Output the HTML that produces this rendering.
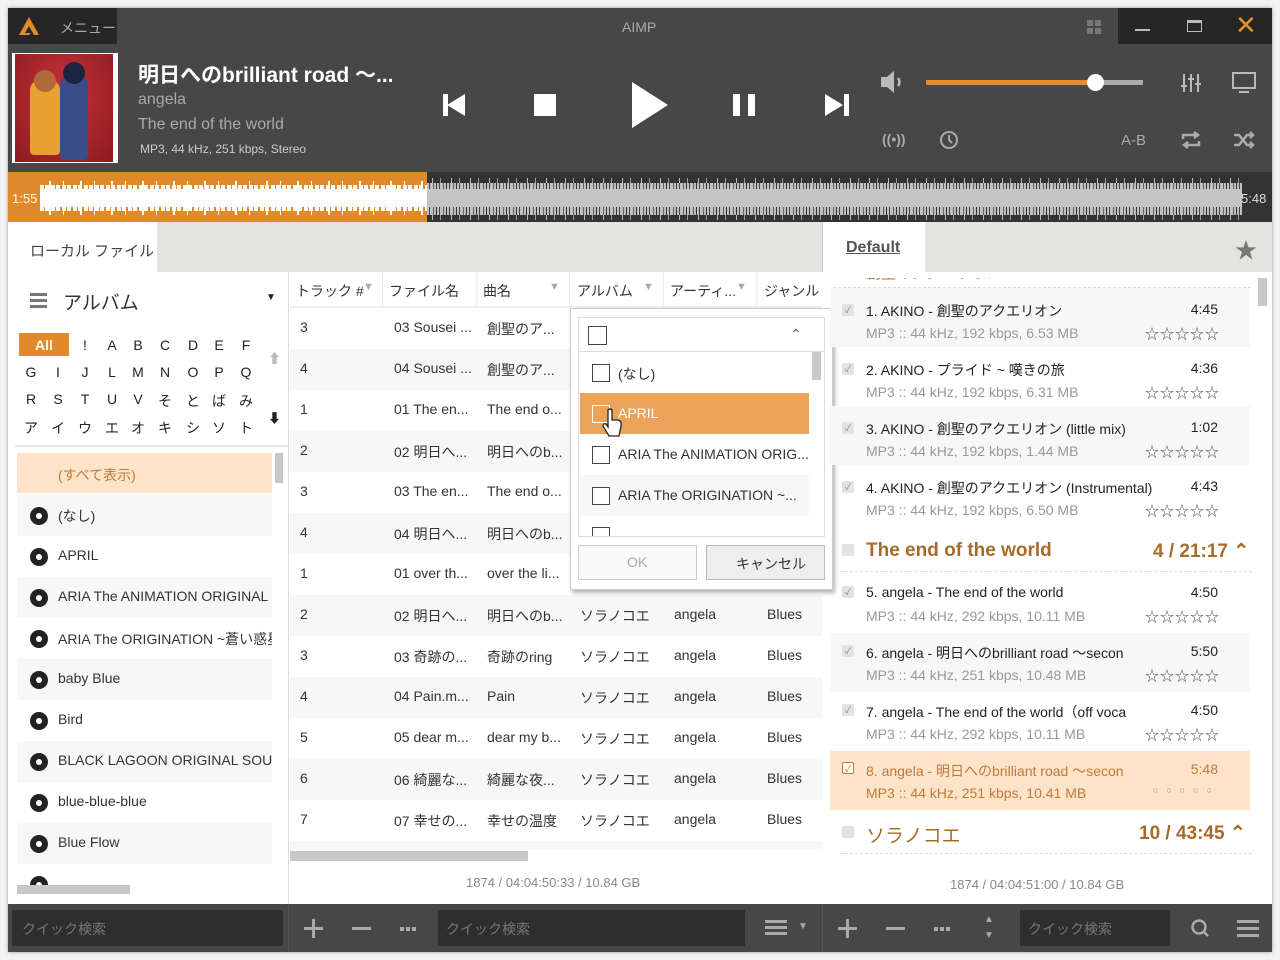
<!DOCTYPE html>
<html><head><meta charset="utf-8"><style>
*{box-sizing:border-box;margin:0;padding:0}
body{width:1280px;height:960px;background:#f3f3f3;font-family:"Liberation Sans","Noto Sans CJK JP",sans-serif;position:relative;overflow:hidden;color:#333}
.a{position:absolute}
.win{left:8px;top:8px;width:1264px;height:944px;background:#fff;box-shadow:0 0 3px rgba(0,0,0,.4)}
.dark{background:#474747}
.t{position:absolute;white-space:nowrap}
.row{position:absolute;left:290px;width:532px;height:41px;font-size:14px}
.row span{position:absolute;top:11px;white-space:nowrap}
.alt{background:#f7f7f7}
.li{position:absolute;left:17px;width:255px;height:41px;font-size:14px}
.li .d{position:absolute;left:13px;top:12px;width:18px;height:18px;border-radius:50%;background:#222}
.li .d:after{content:"";position:absolute;left:6px;top:6px;width:6px;height:6px;border-radius:50%;background:#fff}
.li span{position:absolute;left:41px;top:11px;width:214px;overflow:hidden;white-space:nowrap}
.pi{position:absolute;left:830px;width:420px;height:59px}
.pi .cb{position:absolute;left:12px;top:16px;width:12px;height:12px;background:#e2e2e2;border-radius:2px;font-size:9px;color:#888;text-align:center;line-height:12px;font-style:normal}
.pi .n{position:absolute;left:36px;top:21px;font-size:14px;color:#222;white-space:nowrap}
.pi .s{position:absolute;left:36px;top:45px;font-size:14px;color:#999;white-space:nowrap}
.pi .tm{position:absolute;right:32px;top:21px;font-size:14px;color:#222}
.pi .st{position:absolute;right:30px;top:44px;font-size:14px;color:#555;letter-spacing:1px}
.dd .it{position:absolute;left:580px;width:229px;height:41px;font-size:14px}
.dd .it i{position:absolute;left:12px;top:12px;width:18px;height:18px;border:1.5px solid #444;background:#fff}
.dd .it span{position:absolute;left:38px;top:12px;white-space:nowrap}
.alpha span{position:absolute;font-size:14px;color:#222;width:16px;text-align:center}
.dots{position:absolute;width:4px;height:4px;background:#aaa;box-shadow:6px 0 #aaa,12px 0 #aaa}
</style></head><body>
<div class="a win"></div>
<div class="a dark" style="left:8px;top:8px;width:1264px;height:164px"></div>
<div class="a" style="left:8px;top:8px;width:109px;height:36px;background:#262626"></div>
<svg class="a" style="left:18px;top:16px" width="22" height="20"><path d="M11 1 L21 19 L16 19 L11 10 L7 17 L13 17 L11 19 L1 19 Z" fill="#e08b2c"/></svg>
<div class="t" style="left:60px;top:18px;font-size:14px;color:#aaa">メニュー</div>
<div class="t" style="left:622px;top:19px;font-size:14px;color:#aaa">AIMP</div>
<div class="a" style="left:1087px;top:20px;width:6px;height:6px;background:#777;box-shadow:8px 0 #777,0 8px #777,8px 8px #777"></div>
<div class="a" style="left:1118px;top:8px;width:154px;height:36px;background:#262626"></div>
<div class="a" style="left:1135px;top:29px;width:15px;height:2px;background:#bbb"></div>
<div class="a" style="left:1187px;top:20px;width:15px;height:12px;border:1.5px solid #bbb;border-top-width:3px"></div>
<div class="t" style="left:1235px;top:10px;font-size:26px;color:#e8902a">✕</div>
<div class="a" style="left:12px;top:53px;width:106px;height:110px;background:#fff"></div>
<div class="a" style="left:15px;top:54px;width:98px;height:108px;background:radial-gradient(ellipse at 50% 40%,#c8343a,#8a1a1e)"></div>
<div class="a" style="left:30px;top:80px;width:30px;height:75px;background:#e8a030;border-radius:10px 10px 4px 4px"></div>
<div class="a" style="left:60px;top:75px;width:28px;height:85px;background:#3a4c8a;border-radius:10px 10px 4px 4px"></div>
<div class="a" style="left:34px;top:70px;width:22px;height:22px;background:#b06a3a;border-radius:50%"></div>
<div class="a" style="left:63px;top:62px;width:22px;height:22px;background:#1e2440;border-radius:50%"></div>
<div class="t" style="left:138px;top:59px;font-size:21px;font-weight:bold;color:#fff">明日へのbrilliant road ～...</div>
<div class="t" style="left:138px;top:91px;font-size:16px;color:#aaa">angela</div>
<div class="t" style="left:138px;top:116px;font-size:16px;color:#aaa">The end of the world</div>
<div class="t" style="left:140px;top:142px;font-size:12px;color:#ccc">MP3, 44 kHz, 251 kbps, Stereo</div>
<svg class="a" style="left:443px;top:94px" width="24" height="22"><rect x="0" y="0" width="5" height="22" fill="#fff"/><path d="M4 11 L22 0 L22 22Z" fill="#fff"/></svg>
<div class="a" style="left:534px;top:94px;width:22px;height:22px;background:#fff"></div>
<svg class="a" style="left:632px;top:82px" width="38" height="46"><path d="M0 0 L36 23 L0 46Z" fill="#fff"/></svg>
<div class="a" style="left:733px;top:94px;width:7px;height:22px;background:#fff"></div>
<div class="a" style="left:748px;top:94px;width:7px;height:22px;background:#fff"></div>
<svg class="a" style="left:825px;top:94px" width="24" height="22"><path d="M0 0 L18 11 L0 22Z" fill="#fff"/><rect x="19" y="0" width="5" height="22" fill="#fff"/></svg>
<svg class="a" style="left:880px;top:70px" width="28" height="24"><path d="M1 7 H7 L14 1 V23 L7 17 H1Z" fill="#bbb"/><path d="M18 8 Q21 12 18 16" stroke="#bbb" stroke-width="2.5" fill="none"/></svg>
<div class="a" style="left:926px;top:80px;width:170px;height:5px;background:#e28e2e"></div>
<div class="a" style="left:1096px;top:80px;width:47px;height:5px;background:#aaa"></div>
<div class="a" style="left:1087px;top:74px;width:17px;height:17px;border-radius:50%;background:#fff"></div>
<svg class="a" style="left:1180px;top:72px" width="22" height="22" stroke="#bbb" stroke-width="2"><path d="M4 2V20M11 2V20M18 2V20"/><path d="M1 14H7M8 7H14M15 12H21"/></svg>
<svg class="a" style="left:1232px;top:72px" width="24" height="22" stroke="#bbb" stroke-width="2" fill="none"><rect x="1" y="1" width="22" height="15"/><path d="M7 20H17"/></svg>
<div class="t" style="left:882px;top:131px;font-size:14px;color:#aaa;font-weight:bold">((•))</div>
<svg class="a" style="left:939px;top:130px" width="20" height="20" stroke="#aaa" stroke-width="2" fill="none"><circle cx="10" cy="10" r="8"/><path d="M10 5V10L13 13"/></svg>
<div class="t" style="left:1121px;top:132px;font-size:15px;color:#aaa">A-B</div>
<svg class="a" style="left:1181px;top:131px" width="20" height="18" stroke="#aaa" stroke-width="2.5" fill="none"><path d="M2 8V4H16M13 1L17 4L13 7M18 10V14H4M7 17L3 14L7 11"/></svg>
<svg class="a" style="left:1233px;top:131px" width="22" height="18" stroke="#aaa" stroke-width="2.5" fill="none"><path d="M1 4H6L14 14H20M17 11L20 14L17 17M1 14H6L14 4H20M17 1L20 4L17 7"/></svg>
<!-- waveform -->
<div class="a" style="left:8px;top:172px;width:1264px;height:50px;background:#333"></div>
<div class="a" style="left:8px;top:172px;width:419px;height:50px;background:#e08a2c"></div>
<div class="a" style="left:40px;top:181px;width:387px;height:34px;background:repeating-linear-gradient(90deg,transparent 0 9px,#fff 9px 11px,transparent 11px 23px,#fff 23px 24px,transparent 24px 31px)"></div>
<div class="a" style="left:40px;top:185px;width:387px;height:26px;background:repeating-linear-gradient(90deg,#fff 0 4px,transparent 4px 5px,#fff 5px 9px,transparent 9px 11px)"></div>
<div class="a" style="left:40px;top:189px;width:387px;height:18px;background:#fff"></div>
<div class="a" style="left:427px;top:178px;width:815px;height:42px;background:repeating-linear-gradient(90deg,transparent 0 5px,#bbb 5px 6px,transparent 6px 13px,#999 13px 14px,transparent 14px 19px)"></div>
<div class="a" style="left:427px;top:183px;width:815px;height:32px;background:repeating-linear-gradient(90deg,#c0c0c0 0 2px,#444 2px 3px,#c0c0c0 3px 6px,#666 6px 7px,#bbb 7px 9px,#333 9px 10px)"></div>
<div class="a" style="left:427px;top:189px;width:815px;height:18px;background:#c4c4c4"></div>
<div class="t" style="left:12px;top:191px;font-size:13px;color:#fff">1:55</div>
<div class="t" style="left:1241px;top:191px;font-size:13px;color:#ddd">5:48</div>
<div class="a" style="left:8px;top:222px;width:814px;height:50px;background:#e3e3e0"></div>
<div class="a" style="left:8px;top:222px;width:149px;height:50px;background:#fff"></div>
<div class="t" style="left:30px;top:240px;font-size:15px;color:#444">ローカル ファイル</div>
<div class="a" style="left:822px;top:222px;width:450px;height:50px;background:#e3e3e0;border-left:1px solid #ccc"></div>
<div class="a" style="left:823px;top:222px;width:102px;height:50px;background:#fff"></div>
<div class="t" style="left:846px;top:239px;font-size:16px;font-weight:bold;color:#555;text-decoration:underline">Default</div>
<div class="t" style="left:1235px;top:233px;font-size:22px;color:#777">★</div>
<div class="a" style="left:288px;top:272px;width:1px;height:632px;background:#ddd"></div>
<div class="a" style="left:30px;top:293px;width:17px;height:3px;background:#777;box-shadow:0 6px #777,0 12px #777"></div>
<div class="t" style="left:63px;top:288px;font-size:19px;color:#333">アルバム</div>
<div class="t" style="left:266px;top:292px;font-size:10px;color:#222">▼</div>
<div class="a" style="left:19px;top:333px;width:50px;height:23px;background:#e08a2c"></div>
<div class="t" style="left:35px;top:337px;font-size:14px;color:#fff;font-weight:bold">All</div>
<div class="alpha">
<span style="left:77px;top:337px">!</span><span style="left:104px;top:337px">A</span><span style="left:130px;top:337px">B</span><span style="left:157px;top:337px">C</span><span style="left:185px;top:337px">D</span><span style="left:211px;top:337px">E</span><span style="left:238px;top:337px">F</span>
<span style="left:23px;top:364px">G</span><span style="left:50px;top:364px">I</span><span style="left:77px;top:364px">J</span><span style="left:104px;top:364px">L</span><span style="left:130px;top:364px">M</span><span style="left:157px;top:364px">N</span><span style="left:185px;top:364px">O</span><span style="left:211px;top:364px">P</span><span style="left:238px;top:364px">Q</span>
<span style="left:23px;top:391px">R</span><span style="left:50px;top:391px">S</span><span style="left:77px;top:391px">T</span><span style="left:104px;top:391px">U</span><span style="left:130px;top:391px">V</span><span style="left:157px;top:391px">そ</span><span style="left:185px;top:391px">と</span><span style="left:211px;top:391px">ば</span><span style="left:238px;top:391px">み</span>
<span style="left:23px;top:418px">ア</span><span style="left:50px;top:418px">イ</span><span style="left:77px;top:418px">ウ</span><span style="left:104px;top:418px">エ</span><span style="left:130px;top:418px">オ</span><span style="left:157px;top:418px">キ</span><span style="left:185px;top:418px">シ</span><span style="left:211px;top:418px">ソ</span><span style="left:238px;top:418px">ト</span>
</div>
<div class="t" style="left:268px;top:348px;font-size:13px;color:#bbb">⬆</div>
<div class="t" style="left:268px;top:408px;font-size:13px;color:#222">⬇</div>
<div class="a" style="left:15px;top:445px;width:273px;height:2px;background:#e6e6e6"></div>
<div class="a" style="left:17px;top:453px;width:255px;height:40px;background:#fde3c8"></div>
<div class="t" style="left:58px;top:465px;font-size:14px;color:#c07a3a">(すべて表示)</div>
<div class="a" style="left:275px;top:453px;width:8px;height:30px;background:#c8c8c8"></div>
<div class="li alt" style="top:495px"><i class="d"></i><span>(なし)</span></div>
<div class="li" style="top:536px"><i class="d"></i><span>APRIL</span></div>
<div class="li alt" style="top:577px"><i class="d"></i><span>ARIA The ANIMATION ORIGINAL S</span></div>
<div class="li" style="top:618px"><i class="d"></i><span>ARIA The ORIGINATION ~蒼い惑星</span></div>
<div class="li alt" style="top:659px"><i class="d"></i><span>baby Blue</span></div>
<div class="li" style="top:700px"><i class="d"></i><span>Bird</span></div>
<div class="li alt" style="top:741px"><i class="d"></i><span>BLACK LAGOON ORIGINAL SOUND</span></div>
<div class="li" style="top:782px"><i class="d"></i><span>blue-blue-blue</span></div>
<div class="li alt" style="top:823px"><i class="d"></i><span>Blue Flow</span></div>
<div class="li" style="top:864px;height:25px;overflow:hidden"><i class="d"></i></div>
<div class="a" style="left:17px;top:885px;width:113px;height:9px;background:#c8c8c8"></div>
<div class="a" style="left:290px;top:272px;width:532px;height:36px;border-bottom:2px solid #eee;font-size:14px">
<span class="t" style="left:6px;top:9px">トラック #</span><span class="t" style="left:73px;top:9px;color:#aaa;font-size:11px">▼</span>
<span class="t" style="left:99px;top:9px">ファイル名</span>
<span class="t" style="left:193px;top:9px">曲名</span><span class="t" style="left:259px;top:9px;color:#aaa;font-size:11px">▼</span>
<span class="t" style="left:287px;top:9px">アルバム</span><span class="t" style="left:353px;top:9px;color:#aaa;font-size:11px">▼</span>
<span class="t" style="left:380px;top:9px">アーティ...</span><span class="t" style="left:446px;top:9px;color:#aaa;font-size:11px">▼</span>
<span class="t" style="left:474px;top:9px">ジャンル</span>
</div>
<div class="a" style="left:382px;top:272px;width:1px;height:36px;background:#eee;box-shadow:94px 0 #eee,187px 0 #eee,281px 0 #eee,374px 0 #eee"></div>
<div class="row" style="top:308px"><span style="left:10px">3</span><span style="left:104px">03 Sousei ...</span><span style="left:197px">創聖のア...</span></div>
<div class="row alt" style="top:349px"><span style="left:10px">4</span><span style="left:104px">04 Sousei ...</span><span style="left:197px">創聖のア...</span></div>
<div class="row" style="top:390px"><span style="left:10px">1</span><span style="left:104px">01 The en...</span><span style="left:197px">The end o...</span></div>
<div class="row alt" style="top:431px"><span style="left:10px">2</span><span style="left:104px">02 明日へ...</span><span style="left:197px">明日へのb...</span></div>
<div class="row" style="top:472px"><span style="left:10px">3</span><span style="left:104px">03 The en...</span><span style="left:197px">The end o...</span></div>
<div class="row alt" style="top:513px"><span style="left:10px">4</span><span style="left:104px">04 明日へ...</span><span style="left:197px">明日へのb...</span></div>
<div class="row" style="top:554px"><span style="left:10px">1</span><span style="left:104px">01 over th...</span><span style="left:197px">over the li...</span></div>
<div class="row alt" style="top:595px"><span style="left:10px">2</span><span style="left:104px">02 明日へ...</span><span style="left:197px">明日へのb...</span><span style="left:290px">ソラノコエ</span><span style="left:384px">angela</span><span style="left:477px">Blues</span></div>
<div class="row" style="top:636px"><span style="left:10px">3</span><span style="left:104px">03 奇跡の...</span><span style="left:197px">奇跡のring</span><span style="left:290px">ソラノコエ</span><span style="left:384px">angela</span><span style="left:477px">Blues</span></div>
<div class="row alt" style="top:677px"><span style="left:10px">4</span><span style="left:104px">04 Pain.m...</span><span style="left:197px">Pain</span><span style="left:290px">ソラノコエ</span><span style="left:384px">angela</span><span style="left:477px">Blues</span></div>
<div class="row" style="top:718px"><span style="left:10px">5</span><span style="left:104px">05 dear m...</span><span style="left:197px">dear my b...</span><span style="left:290px">ソラノコエ</span><span style="left:384px">angela</span><span style="left:477px">Blues</span></div>
<div class="row alt" style="top:759px"><span style="left:10px">6</span><span style="left:104px">06 綺麗な...</span><span style="left:197px">綺麗な夜...</span><span style="left:290px">ソラノコエ</span><span style="left:384px">angela</span><span style="left:477px">Blues</span></div>
<div class="row" style="top:800px"><span style="left:10px">7</span><span style="left:104px">07 幸せの...</span><span style="left:197px">幸せの温度</span><span style="left:290px">ソラノコエ</span><span style="left:384px">angela</span><span style="left:477px">Blues</span></div>
<div class="row alt" style="top:841px;height:8px"></div>
<div class="a" style="left:290px;top:851px;width:238px;height:10px;background:#c8c8c8"></div>
<div class="t" style="left:466px;top:875px;font-size:13px;color:#888">1874 / 04:04:50:33 / 10.84 GB</div>
<div class="dd">
<div class="a" style="left:570px;top:308px;width:263px;height:282px;background:#fff;border:1px solid #ccc;box-shadow:2px 3px 4px rgba(0,0,0,.3)"></div>
<div class="a" style="left:578px;top:317px;width:247px;height:220px;border:1px solid #ddd"></div>
<div class="a" style="left:588px;top:326px;width:19px;height:19px;border:1.5px solid #444"></div>
<div class="t" style="left:790px;top:326px;font-size:14px;color:#555">⌃</div>
<div class="a" style="left:579px;top:351px;width:245px;height:1px;background:#ddd"></div>
<div class="a" style="left:812px;top:352px;width:9px;height:28px;background:#c8c8c8"></div>
<div class="it" style="top:352px"><i></i><span>(なし)</span></div>
<div class="it" style="top:393px;background:#eba35a;color:#fff"><i style="background:transparent;border-color:#fff"></i><span>APRIL</span></div>
<div class="it" style="top:434px"><i></i><span>ARIA The ANIMATION ORIG...</span></div>
<div class="it alt" style="top:475px"><i></i><span>ARIA The ORIGINATION ~...</span></div>
<div class="a" style="left:592px;top:527px;width:18px;height:9px;border:1.5px solid #444;border-bottom:none"></div>
<svg class="a" style="left:600px;top:408px" width="24" height="32"><path d="M8 2 Q10 0 12 2 V12 H18 Q22 13 21 18 L19 28 H9 L3 18 Q3 15 6 16 L8 19Z" fill="#fff" stroke="#222" stroke-width="1.3"/></svg>
<div class="a" style="left:578px;top:545px;width:119px;height:35px;border:1px solid #ccc;background:#fafafa"></div>
<div class="t" style="left:627px;top:554px;font-size:14px;color:#aaa">OK</div>
<div class="a" style="left:706px;top:545px;width:119px;height:35px;border:1px solid #bbb;background:#eee"></div>
<div class="t" style="left:736px;top:554px;font-size:14px;color:#333">キャンセル</div>
</div>
<div class="t" style="left:866px;top:262px;font-size:15px;color:#b07030;clip-path:inset(10px 0 0 0)">創聖のアクエリオン</div>
<div class="t" style="left:1150px;top:262px;font-size:15px;color:#b07030;clip-path:inset(10px 0 0 0)">4 / 16:07</div>
<div class="a" style="left:823px;top:272px;width:448px;height:6px;background:#fff"></div>
<div class="a" style="left:833px;top:287px;width:418px;border-top:1px dashed #ddd"></div>
<div class="a" style="left:1258px;top:278px;width:9px;height:28px;background:#c8c8c8"></div>
<div class="pi alt" style="top:288px"><i class="cb">✓</i><span class="n" style="top:13px">1. AKINO - 創聖のアクエリオン</span><span class="tm" style="top:13px">4:45</span><span class="s" style="top:37px">MP3 :: 44 kHz, 192 kbps, 6.53 MB</span><span class="st" style="top:36px">☆☆☆☆☆</span></div>
<div class="pi" style="top:347px"><i class="cb">✓</i><span class="n" style="top:13px">2. AKINO - プライド ~ 嘆きの旅</span><span class="tm" style="top:13px">4:36</span><span class="s" style="top:37px">MP3 :: 44 kHz, 192 kbps, 6.31 MB</span><span class="st" style="top:36px">☆☆☆☆☆</span></div>
<div class="pi alt" style="top:406px"><i class="cb">✓</i><span class="n" style="top:13px">3. AKINO - 創聖のアクエリオン (little mix)</span><span class="tm" style="top:13px">1:02</span><span class="s" style="top:37px">MP3 :: 44 kHz, 192 kbps, 1.44 MB</span><span class="st" style="top:36px">☆☆☆☆☆</span></div>
<div class="pi" style="top:465px"><i class="cb">✓</i><span class="n" style="top:13px">4. AKINO - 創聖のアクエリオン (Instrumental)</span><span class="tm" style="top:13px">4:43</span><span class="s" style="top:37px">MP3 :: 44 kHz, 192 kbps, 6.50 MB</span><span class="st" style="top:36px">☆☆☆☆☆</span></div>
<div class="a" style="left:842px;top:544px;width:12px;height:12px;background:#e2e2e2;border-radius:2px"></div>
<div class="t" style="left:866px;top:540px;font-size:19px;color:#a86a2a;font-weight:bold">The end of the world</div>
<div class="t" style="left:1153px;top:540px;font-size:19px;color:#a86a2a;font-weight:bold">4 / 21:17 ⌃</div>
<div class="a" style="left:840px;top:571px;width:412px;border-top:1px dashed #ddd"></div>
<div class="pi" style="top:572px"><i class="cb" style="top:14px">✓</i><span class="n" style="top:12px">5. angela - The end of the world</span><span class="tm" style="top:12px">4:50</span><span class="s" style="top:36px">MP3 :: 44 kHz, 292 kbps, 10.11 MB</span><span class="st" style="top:35px">☆☆☆☆☆</span></div>
<div class="pi alt" style="top:633px;height:59px"><i class="cb" style="top:12px">✓</i><span class="n" style="top:10px">6. angela - 明日へのbrilliant road ～secon</span><span class="tm" style="top:10px">5:50</span><span class="s" style="top:34px">MP3 :: 44 kHz, 251 kbps, 10.48 MB</span><span class="st" style="top:33px">☆☆☆☆☆</span></div>
<div class="pi" style="top:692px"><i class="cb" style="top:12px">✓</i><span class="n" style="top:10px">7. angela - The end of the world（off voca</span><span class="tm" style="top:10px">4:50</span><span class="s" style="top:34px">MP3 :: 44 kHz, 292 kbps, 10.11 MB</span><span class="st" style="top:33px">☆☆☆☆☆</span></div>
<div class="pi" style="top:751px;background:#fde3c8"><i class="cb" style="background:#fff;border:1px solid #c07a3a;color:#c07a3a;top:11px">✓</i><span class="n" style="top:10px;color:#c07a3a">8. angela - 明日へのbrilliant road ～secon</span><span class="tm" style="top:10px;color:#c07a3a">5:48</span><span class="s" style="top:34px;color:#c07a3a">MP3 :: 44 kHz, 251 kbps, 10.41 MB</span><span class="st" style="top:34px;color:#c07a3a;font-size:9px;letter-spacing:8px">○○○○○</span></div>
<div class="a" style="left:842px;top:826px;width:12px;height:12px;background:#e2e2e2;border-radius:2px"></div>
<div class="t" style="left:866px;top:821px;font-size:19px;color:#a86a2a">ソラノコエ</div>
<div class="t" style="left:1139px;top:822px;font-size:19px;color:#a86a2a;font-weight:bold">10 / 43:45 ⌃</div>
<div class="a" style="left:840px;top:853px;width:412px;border-top:1px dashed #ddd"></div>
<div class="t" style="left:950px;top:877px;font-size:13px;color:#888">1874 / 04:04:51:00 / 10.84 GB</div>
<div class="a dark" style="left:8px;top:904px;width:1264px;height:48px"></div>
<div class="a" style="left:12px;top:910px;width:271px;height:36px;background:#2e2e2e"></div>
<div class="t" style="left:22px;top:919px;font-size:14px;color:#777">クイック検索</div>
<div class="a" style="left:288px;top:904px;width:1px;height:48px;background:#555"></div>
<div class="a" style="left:312px;top:919px;width:3px;height:19px;background:#aaa"></div>
<div class="a" style="left:304px;top:927px;width:19px;height:3px;background:#aaa"></div>
<div class="a" style="left:352px;top:927px;width:19px;height:3px;background:#aaa"></div>
<div class="dots" style="left:400px;top:927px"></div>
<div class="a" style="left:438px;top:910px;width:307px;height:36px;background:#2e2e2e"></div>
<div class="t" style="left:446px;top:919px;font-size:14px;color:#777">クイック検索</div>
<div class="a" style="left:765px;top:920px;width:22px;height:3px;background:#aaa;box-shadow:0 6px #aaa,0 12px #aaa"></div>
<div class="t" style="left:798px;top:921px;font-size:10px;color:#aaa">▼</div>
<div class="a" style="left:822px;top:904px;width:1px;height:48px;background:#555"></div>
<div class="a" style="left:846px;top:919px;width:3px;height:19px;background:#aaa"></div>
<div class="a" style="left:838px;top:927px;width:19px;height:3px;background:#aaa"></div>
<div class="a" style="left:886px;top:927px;width:19px;height:3px;background:#aaa"></div>
<div class="dots" style="left:934px;top:927px"></div>
<div class="t" style="left:984px;top:912px;font-size:10px;color:#aaa;line-height:16px">▲<br>▼</div>
<div class="a" style="left:1020px;top:910px;width:150px;height:36px;background:#2e2e2e"></div>
<div class="t" style="left:1028px;top:919px;font-size:14px;color:#777">クイック検索</div>
<svg class="a" style="left:1190px;top:918px" width="20" height="20" stroke="#aaa" stroke-width="2.5" fill="none"><circle cx="9" cy="9" r="6.5"/><path d="M13 13L18 18"/></svg>
<div class="a" style="left:1237px;top:920px;width:22px;height:3px;background:#aaa;box-shadow:0 7px #aaa,0 14px #aaa"></div>
</body></html>
